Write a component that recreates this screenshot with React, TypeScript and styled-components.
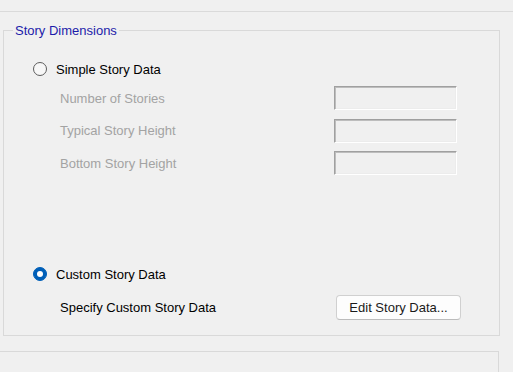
import * as React from "react";
import styled, { createGlobalStyle } from "styled-components";

const GlobalStyle = createGlobalStyle`
  html, body {
    margin: 0;
    padding: 0;
    background: #f0f0f0;
  }
  body {
    width: 513px;
    height: 372px;
    overflow: hidden;
    font-family: "Liberation Sans", Arial, sans-serif;
    font-size: 13px;
    color: #000;
  }
`;

const Page = styled.div`
  width: 513px;
  height: 372px;
  overflow: hidden;
  background: #f0f0f0;
`;

const TopEdge = styled.div`
  height: 11px;
  border-bottom: 1px solid #dadada;
`;

const Group = styled.fieldset`
  margin: 11px 0 0 3px;
  width: 497px;
  box-sizing: border-box;
  min-width: 0;
  border: 1px solid #d9d9d9;
  padding: 0 0 15px 9px;
  display: flex;
  flex-direction: column;
`;

const Legend = styled.legend`
  padding: 0 2px;
  color: #1c1caa;
  line-height: 15px;
  font-size: 13px;
`;

const RadioRow = styled.label<{ $top: number }>`
  display: flex;
  align-items: center;
  gap: 9px;
  height: 16px;
  margin-top: ${(p) => p.$top}px;
  padding-left: 20px;
`;

const RadioDot = styled.span<{ $checked?: boolean }>`
  width: 14px;
  height: 14px;
  border-radius: 50%;
  box-sizing: border-box;
  flex: none;
  display: flex;
  align-items: center;
  justify-content: center;
  background: ${(p) => (p.$checked ? "#005fb8" : "#f7f7f7")};
  border: 1px solid ${(p) => (p.$checked ? "#005fb8" : "#5c5c5c")};
  &::after {
    content: "";
    display: ${(p) => (p.$checked ? "block" : "none")};
    width: 6px;
    height: 6px;
    border-radius: 50%;
    background: #fff;
  }
`;

const Fields = styled.div`
  display: grid;
  grid-template-columns: 274px 123px;
  grid-auto-rows: 24px;
  row-gap: 8.5px;
  align-items: center;
  margin-top: 9px;
  padding-left: 47px;
`;

const FieldLabel = styled.span`
  color: #a3a3a3;
`;

const SunkenBox = styled.div`
  height: 24px;
  box-sizing: border-box;
  border-style: solid;
  border-width: 1px;
  border-color: #a0a0a0 #ffffff #ffffff #a0a0a0;
  box-shadow: inset 1px 1px 0 #bdbdbd, inset -1px -1px 0 #ececec;
  background: #f0f0f0;
`;

const ActionRow = styled.div`
  display: grid;
  grid-template-columns: 276px 125px;
  align-items: center;
  margin-top: 13px;
  padding-left: 47px;
`;

const Button = styled.button`
  height: 25px;
  box-sizing: border-box;
  border: 1px solid #d0d0d0;
  border-bottom-color: #bcbcbc;
  border-radius: 4px;
  background: #fdfdfd;
  font-family: "Liberation Sans", Arial, sans-serif;
  font-size: 13px;
  color: #1a1a1a;
  padding: 0;
`;

const NextGroup = styled.div`
  margin: 15px 0 0 -2px;
  width: 501px;
  height: 60px;
  box-sizing: border-box;
  border: 1px solid #d9d9d9;
`;

const fields = ["Number of Stories", "Typical Story Height", "Bottom Story Height"];

export default function App() {
  return (
    <Page>
      <GlobalStyle />
      <TopEdge />
      <Group>
        <Legend>Story Dimensions</Legend>
        <RadioRow $top={23}>
          <RadioDot />
          <span>Simple Story Data</span>
        </RadioRow>
        <Fields>
          {fields.map((f) => (
            <React.Fragment key={f}>
              <FieldLabel>{f}</FieldLabel>
              <SunkenBox />
            </React.Fragment>
          ))}
        </Fields>
        <RadioRow $top={91}>
          <RadioDot $checked />
          <span>Custom Story Data</span>
        </RadioRow>
        <ActionRow>
          <span>Specify Custom Story Data</span>
          <Button>Edit Story Data...</Button>
        </ActionRow>
      </Group>
      <NextGroup />
    </Page>
  );
}
